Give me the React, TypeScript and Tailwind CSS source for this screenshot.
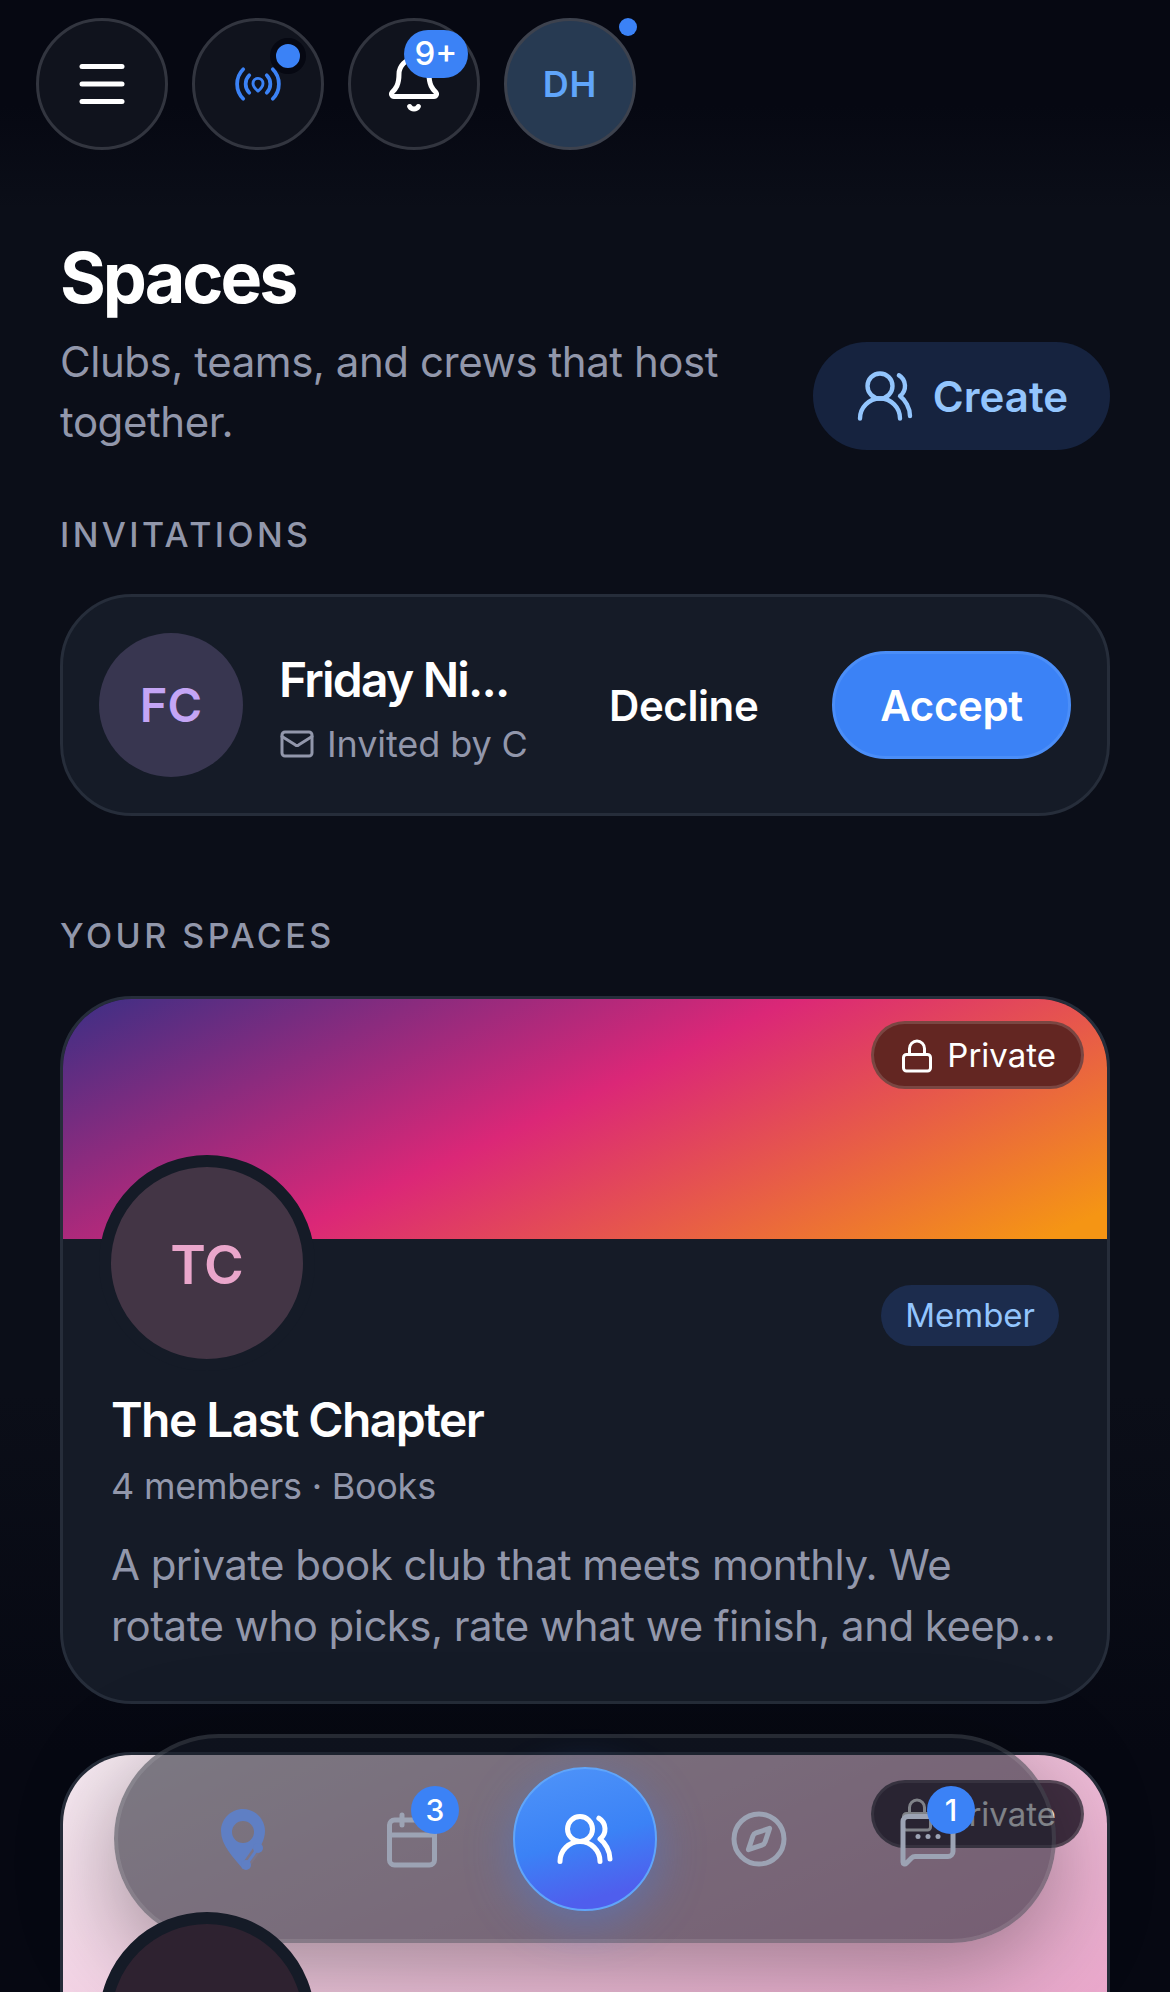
import React from 'react';
import { Bell, Calendar, Compass, Lock, Mail, Menu, MessageSquareMore, UsersRound } from 'lucide-react';

const font = { fontFamily: 'Inter, "Liberation Sans", sans-serif' };

const PinRadio = () => (
  <svg width="50" height="50" viewBox="0 0 24 24" fill="none" stroke="#3b82f6" strokeWidth="1.8" strokeLinecap="round" strokeLinejoin="round">
    <path d="M4.900 4.900C1 8.800 1 15.200 4.900 19.100" />
    <path d="M7.800 7.800c-2.300 2.300-2.300 6.100 0 8.400" />
    <path d="M19.100 4.900c3.900 3.900 3.900 10.300 0 14.200" />
    <path d="M16.200 7.800c2.300 2.300 2.300 6.100 0 8.400" />
    <path d="M12 15.400c-1.500-1.300-2.400-2.400-2.400-3.700a2.400 2.400 0 0 1 4.800 0c0 1.300-.9 2.400-2.400 3.700z" strokeWidth="1.400" />
  </svg>
);

const RoutePin = () => (
  <svg width="44" height="62" viewBox="0 0 44 62">
    <path
      fillRule="evenodd"
      fill="#5f7fc4"
      d="M22 0C10 0 0 10 0 22 0 36 12 48 22 60 32 48 44 36 44 22 44 10 34 0 22 0zm0 12a11 11 0 1 1 0 22 11 11 0 0 1 0-22z"
    />
    <path d="M37 39 L25 56" stroke="#7c7486" strokeWidth="8" strokeLinecap="round" />
    <path d="M37 39 L25 56" stroke="#5f7fc4" strokeWidth="3" />
    <circle cx="37" cy="39" r="5" fill="#5f7fc4" />
    <circle cx="25" cy="56" r="5" fill="#5f7fc4" />
  </svg>
);

const HeaderButton = ({ children }: { children: React.ReactNode }) => (
  <button className="relative flex h-[132px] w-[132px] items-center justify-center rounded-full border-[3px] border-[#32353f] bg-[#10131d]">
    {children}
  </button>
);

const Badge = ({ label, className }: { label: string; className: string }) => (
  <span className={`absolute flex h-[48px] items-center justify-center rounded-full bg-[#3b82f6] text-[30px] font-medium text-white ${className}`}>
    {label}
  </span>
);

const PrivatePill = ({ className }: { className: string }) => (
  <span className={`absolute right-[23px] flex h-[68px] items-center gap-[12px] rounded-full border-[3px] border-white/15 pl-[25px] pr-[25px] pt-[2px] text-[33px] text-white ${className}`}>
    <Lock size={36} strokeWidth={2} />
    Private
  </span>
);

export default function App() {
  return (
    <div style={font} className="relative h-[1992px] w-full overflow-hidden bg-linear-[180deg,#0b0e18_70%,#060812_88%]">
      <main className="px-[60px] pt-[236px]">
        <div className="flex items-end justify-between">
          <div className="w-[690px]">
            <h1 className="text-[70px] font-bold leading-[84px] tracking-[-3px] text-white">Spaces</h1>
            <p className="mt-[12px] text-[42px] leading-[60px] tracking-[-0.45px] text-[#9297ab]">Clubs, teams, and crews that host together.</p>
          </div>
          <button className="mb-[2px] flex h-[108px] w-[297px] items-center justify-center gap-[18px] rounded-full bg-[#16233f] text-[42px] font-semibold text-[#93c5fd]">
            <UsersRound size={60} strokeWidth={1.75} />
            Create
          </button>
        </div>

        <h2 className="mt-[59px] text-[34px] font-medium leading-[48px] tracking-[3.4px] text-[#9297ab]">INVITATIONS</h2>
        <div className="mt-[35px] flex h-[222px] items-center rounded-[72px] border-[3px] border-[#262d3a] bg-[#151b27] pl-[36px] pr-[36px]">
          <div className="flex h-[144px] w-[144px] shrink-0 items-center justify-center rounded-full bg-[#383650] text-[47px] font-semibold text-[#c4a5f5]">
            FC
          </div>
          <div className="ml-[36px] w-[290px] pt-[7px]">
            <div className="text-[48px] font-semibold leading-[60px] tracking-[-1.8px] text-white">Friday Ni...</div>
            <div className="mt-[10px] flex items-center gap-[12px] text-[36px] leading-[48px] tracking-[-0.1px] text-[#9297ab]">
              <Mail size={36} strokeWidth={2} />
              Invited by C
            </div>
          </div>
          <span className="ml-[40px] text-[42px] font-semibold tracking-[-0.4px] text-white">Decline</span>
          <button className="ml-auto h-[108px] w-[239px] rounded-full border-[3px] border-[#4b8ef8] bg-[#3b82f6] text-[42px] font-semibold tracking-[-0.4px] text-white">
            Accept
          </button>
        </div>

        <h2 className="mt-[96px] text-[34px] font-medium leading-[48px] tracking-[3.5px] text-[#9297ab]">YOUR SPACES</h2>
        <div className="mt-[36px] flex flex-col gap-[48px]">
          <div className="relative overflow-hidden rounded-[72px] border-[3px] border-[#262d3a] bg-[#151b27]">
            <div className="relative h-[240px] bg-linear-[155deg,#3b2f85,#db2777_47%,#f59514_96%]">
              <PrivatePill className="top-[22px] bg-[#632622]" />
            </div>
            <div className="px-[48px] pb-[45px]">
              <div className="flex items-start justify-between">
                <div className="relative z-10 -ml-[12px] -mt-[84px] flex h-[216px] w-[216px] items-center justify-center rounded-full border-[12px] border-[#151b27] bg-[#433545] pt-[2px] text-[54px] font-semibold text-[#eaa6cb]">
                  TC
                </div>
                <span className="mt-[46px] flex h-[61px] items-center rounded-full bg-[#1c2c4d] px-[24px] text-[33px] text-[#93c5fd]">
                  Member
                </span>
              </div>
              <h3 className="mt-[13px] text-[48px] font-semibold leading-[72px] tracking-[-1.6px] text-white">The Last Chapter</h3>
              <p className="mt-[6px] text-[36px] leading-[48px] tracking-[-0.25px] text-[#9297ab]">4 members · Books</p>
              <p className="mt-[25px] line-clamp-2 text-[42px] leading-[60.5px] tracking-[-0.55px] text-[#9297ab]">
                A private book club that meets monthly. We rotate who picks, rate what we finish, and keep a running list of what comes next.
              </p>
            </div>
          </div>

          <div className="relative overflow-hidden rounded-[72px] border-[3px] border-[#262d3a] bg-[#151b27]">
            <div className="relative h-[300px] bg-linear-[155deg,#f7ecf3,#f0c4dc_50%,#e9a3c9]">
              <PrivatePill className="top-[25px] bg-[#412f42]" />
            </div>
            <div className="px-[48px]">
              <div className="relative z-10 -ml-[12px] -mt-[143px] h-[216px] w-[216px] rounded-full border-[12px] border-[#151b27] bg-[#2e2230]" />
            </div>
          </div>
        </div>
      </main>

      <div className="pointer-events-none absolute inset-x-0 top-0 h-[210px] bg-gradient-to-b from-[#060812] via-[#060812] to-transparent" />
      <header className="absolute left-[36px] top-[18px] flex gap-[24px]">
        <HeaderButton>
          <Menu size={60} strokeWidth={2} className="text-white" />
        </HeaderButton>
        <HeaderButton>
          <PinRadio />
          <span className="absolute left-[75px] top-[17px] box-content h-[24px] w-[24px] rounded-full border-[6px] border-[#060812] bg-[#3b82f6]" />
        </HeaderButton>
        <HeaderButton>
          <Bell size={60} strokeWidth={2} className="text-white" />
          <Badge label="9+" className="left-[53px] top-[9px] w-[64px] text-[33px]" />
        </HeaderButton>
        <button className="relative flex h-[132px] w-[132px] items-center justify-center rounded-full border-[3px] border-[#3d424e] bg-[#273a52] text-[36px] font-semibold tracking-wide text-[#60a5fa]">
          DH
          <span className="absolute right-[-4px] top-[-3px] h-[18px] w-[18px] rounded-full bg-[#3b82f6]" />
        </button>
      </header>

      <nav className="absolute left-[114px] top-[1734px] h-[209px] w-[942px] rounded-[105px] border-[4px] border-white/10 bg-[#151b27]/55 shadow-[0_24px_96px_rgba(0,0,0,0.35)]">
        <span className="absolute left-[103px] top-[71px]"><RoutePin /></span>
        <span className="absolute left-[264px] top-[72px] text-[#9ca3b4]">
          <Calendar size={60} strokeWidth={2} />
        </span>
        <Badge label="3" className="left-[293px] top-[48px] w-[48px]" />
        <span className="absolute left-[395px] top-[29px] flex h-[144px] w-[144px] items-center justify-center rounded-full border-[2px] border-[#60a5fa] bg-linear-[165deg,#4f94f9,#3b82f6_50%,#4f5eed_85%] text-white shadow-[0_12px_48px_rgba(59,130,246,0.4)]">
          <UsersRound size={60} strokeWidth={2} />
        </span>
        <span className="absolute left-[611px] top-[71px] text-[#9ca3b4]">
          <Compass size={60} strokeWidth={2} />
        </span>
        <span className="absolute left-[780px] top-[71px] text-[#9ca3b4]">
          <MessageSquareMore size={60} strokeWidth={2} />
        </span>
        <Badge label="1" className="left-[809px] top-[48px] w-[48px]" />
      </nav>
    </div>
  );
}
